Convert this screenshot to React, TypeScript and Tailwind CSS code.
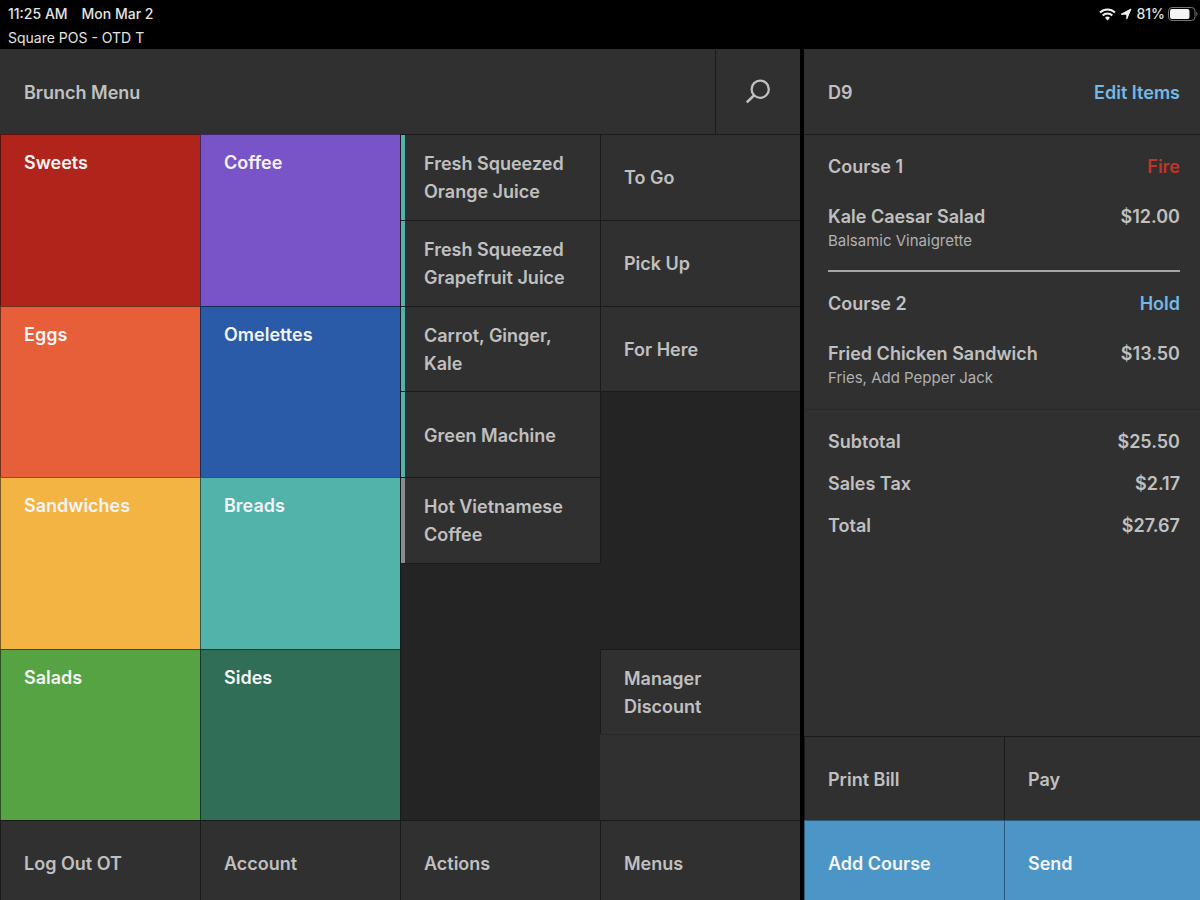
import { clsx } from 'clsx'
import React from 'react'

type Category = {
  readonly name: string
  readonly className: string
}

type MenuItem = {
  readonly name: string
  readonly accent: string
}

type OrderItem = {
  readonly name: string
  readonly modifiers: string
  readonly price: string
}

type Course = {
  readonly name: string
  readonly action: string
  readonly actionClassName: string
  readonly items: readonly OrderItem[]
}

const categories: readonly Category[] = [
  { name: 'Sweets', className: 'bg-[#b1241b]' },
  { name: 'Coffee', className: 'bg-[#7953c8]' },
  { name: 'Eggs', className: 'bg-[#e75f39]' },
  { name: 'Omelettes', className: 'bg-[#295ba8]' },
  { name: 'Sandwiches', className: 'bg-[#f3b443]' },
  { name: 'Breads', className: 'bg-[#51b3aa]' },
  { name: 'Salads', className: 'bg-[#56a343]' },
  { name: 'Sides', className: 'bg-[#306e57]' },
]

const menuItems: readonly MenuItem[] = [
  { name: 'Fresh Squeezed Orange Juice', accent: 'bg-[#51b3aa]' },
  { name: 'Fresh Squeezed Grapefruit Juice', accent: 'bg-[#51b3aa]' },
  { name: 'Carrot, Ginger, Kale', accent: 'bg-[#51b3aa]' },
  { name: 'Green Machine', accent: 'bg-[#51b3aa]' },
  { name: 'Hot Vietnamese Coffee', accent: 'bg-[#8c8c8c]' },
]

const diningOptions: readonly string[] = ['To Go', 'Pick Up', 'For Here']

const navigation: readonly string[] = ['Log Out OT', 'Account', 'Actions', 'Menus']

const courses: readonly Course[] = [
  {
    name: 'Course 1',
    action: 'Fire',
    actionClassName: 'text-[#c1342b]',
    items: [{ name: 'Kale Caesar Salad', modifiers: 'Balsamic Vinaigrette', price: '$12.00' }],
  },
  {
    name: 'Course 2',
    action: 'Hold',
    actionClassName: 'text-[#72b9e6]',
    items: [
      { name: 'Fried Chicken Sandwich', modifiers: 'Fries, Add Pepper Jack', price: '$13.50' },
    ],
  },
]

const totals: readonly (readonly [label: string, amount: string])[] = [
  ['Subtotal', '$25.50'],
  ['Sales Tax', '$2.17'],
  ['Total', '$27.67'],
]

export default function App(): React.JSX.Element {
  return (
    <div className="flex min-h-screen flex-col bg-black font-['Inter',sans-serif] text-lg leading-7 font-semibold text-[#c0c0c0]">
      <StatusBar />
      <main className="flex flex-1">
        <MenuPanel />
        <OrderPanel />
      </main>
    </div>
  )
}

const StatusBar = (): React.JSX.Element => (
  <header className="flex h-[49px] justify-between pt-0.5 pr-0.5 pl-2 text-sm leading-6 font-medium text-[#e4e4e4]">
    <div>
      <div className="flex gap-[14px]">
        <span>11:25 AM</span>
        <span>Mon Mar 2</span>
      </div>
      <div className="font-normal">Square POS - OTD T</div>
    </div>
    <div className="flex h-6 items-center gap-[3px]">
      <WifiIcon />
      <LocationIcon />
      <span>81%</span>
      <BatteryIcon />
    </div>
  </header>
)

const MenuPanel = (): React.JSX.Element => (
  <section className="flex w-2/3 flex-col bg-[#242424]">
    <div className="flex h-[85px] bg-[#303030]">
      <h1 className="flex flex-1 items-center pt-0.5 pl-6">Brunch Menu</h1>
      <button
        type="button"
        aria-label="Search"
        className="flex w-[85px] items-center justify-center border-l border-[#1c1c1c]"
      >
        <SearchIcon />
      </button>
    </div>

    <div className="grid flex-1 grid-cols-4">
      <div className="col-span-2 grid grid-cols-2 grid-rows-4">
        {categories.map(({ name, className }) => (
          <button
            key={name}
            type="button"
            className={clsx(
              'flex items-start border-t border-l border-black/50 pt-[14px] pl-[23px] text-left text-[#f4f4f4]',
              className,
            )}
          >
            {name}
          </button>
        ))}
      </div>

      <div className="grid grid-rows-8 border-l border-[#1a1a1a]">
        {menuItems.map(({ name, accent }) => (
          <button
            key={name}
            type="button"
            className="flex border-t border-[#1a1a1a] bg-[#303030] text-left"
          >
            <span className={clsx('w-1 self-stretch', accent)} />
            <span className="flex-1 self-center pt-0.5 pr-6 pl-[19px]">{name}</span>
          </button>
        ))}
        <div className="row-span-3 border-t border-[#1a1a1a]" />
      </div>

      <div className="grid grid-rows-8">
        {diningOptions.map(name => (
          <DarkTile key={name} name={name} />
        ))}
        <div className="row-span-2 border-t border-l border-[#1a1a1a]" />
        <div />
        <DarkTile name="Manager Discount" />
        <div className="border-t border-[#292929] bg-[#303030]" />
      </div>
    </div>

    <nav className="grid h-20 grid-cols-4">
      {navigation.map(name => (
        <DarkTile key={name} name={name} className="pt-1.5" />
      ))}
    </nav>
  </section>
)

type DarkTileProps = {
  readonly name: string
  readonly className?: string
}

const DarkTile = ({ name, className = 'pt-0.5' }: DarkTileProps): React.JSX.Element => (
  <button
    type="button"
    className={clsx(
      'flex items-center border-t border-l border-[#1a1a1a] bg-[#303030] pr-10 pl-[23px] text-left',
      className,
    )}
  >
    {name}
  </button>
)

const OrderPanel = (): React.JSX.Element => (
  <section className="flex flex-1 flex-col border-l-4 border-black bg-[#303030]">
    <div className="flex h-[85px] items-center justify-between pt-0.5 pr-5 pl-6">
      <h2>D9</h2>
      <button type="button" className="text-[#72b9e6]">
        Edit Items
      </button>
    </div>

    <div className="flex-1 border-t border-[#1c1c1c]">
      <div className="border-b border-[#292929] pr-5 pl-6">
        {courses.map(({ name, action, actionClassName, items }) => (
          <section
            key={name}
            className="border-b-2 border-[#a5a5a5] pt-[18px] pb-[19px] last:border-transparent"
          >
            <div className="flex justify-between">
              <h3>{name}</h3>
              <button type="button" className={actionClassName}>
                {action}
              </button>
            </div>
            <ul className="mt-[22px]">
              {items.map(item => (
                <li key={item.name} className="flex justify-between">
                  <div>
                    <div>{item.name}</div>
                    <div className="text-[15px] leading-5 font-normal text-[#b0b0b0]">
                      {item.modifiers}
                    </div>
                  </div>
                  <span>{item.price}</span>
                </li>
              ))}
            </ul>
          </section>
        ))}
      </div>

      <dl className="flex flex-col gap-[14px] pt-[18px] pr-5 pl-6">
        {totals.map(([label, amount]) => (
          <div key={label} className="flex justify-between">
            <dt>{label}</dt>
            <dd>{amount}</dd>
          </div>
        ))}
      </dl>
    </div>

    <div className="grid grid-cols-[200px_1fr] grid-rows-[84px_80px]">
      <DarkTile name="Print Bill" />
      <DarkTile name="Pay" />
      <BlueTile name="Add Course" />
      <BlueTile name="Send" />
    </div>
  </section>
)

type BlueTileProps = {
  readonly name: string
}

const BlueTile = ({ name }: BlueTileProps): React.JSX.Element => (
  <button
    type="button"
    className="flex items-center border-t border-l border-black/40 bg-[#4b95c7] pt-1.5 pl-[23px] text-left text-[#f4f4f4]"
  >
    {name}
  </button>
)

const SearchIcon = (): React.JSX.Element => (
  <svg viewBox="0 0 26 26" className="h-[26px] w-[26px]" fill="none" stroke="#c0c0c0">
    <circle cx="15.2" cy="10.2" r="8.6" strokeWidth="2.3" />
    <path d="M9.1 16.3 1.8 23.4" strokeWidth="2.6" />
  </svg>
)

const WifiIcon = (): React.JSX.Element => (
  <svg viewBox="0 0 17 13" className="h-[13px] w-[17px]" fill="none" stroke="#f0f0f0">
    <path d="M1 4.6a10.6 10.6 0 0 1 15 0" strokeWidth="2.1" />
    <path d="M3.7 7.5a6.8 6.8 0 0 1 9.6 0" strokeWidth="2" />
    <path d="M8.5 12.4 6 9.8a3.6 3.6 0 0 1 5 0Z" fill="#f0f0f0" stroke="none" />
  </svg>
)

const LocationIcon = (): React.JSX.Element => (
  <svg viewBox="0 0 14 12" className="h-3 w-[14px]" fill="#f0f0f0" stroke="#f0f0f0">
    <path d="M12 1 7.8 10.8V6.2H2.2Z" strokeWidth="1" strokeLinejoin="round" />
  </svg>
)

const BatteryIcon = (): React.JSX.Element => (
  <svg viewBox="0 0 30 14" className="h-[14px] w-[30px]">
    <rect x="0.5" y="0.5" width="26.5" height="13" rx="3.5" fill="none" stroke="#777" />
    <rect x="2" y="2" width="19.5" height="10" rx="2" fill="#f4f4f4" />
    <path d="M28.3 4.8c1.4.5 1.4 3.9 0 4.4Z" fill="#777" />
  </svg>
)
